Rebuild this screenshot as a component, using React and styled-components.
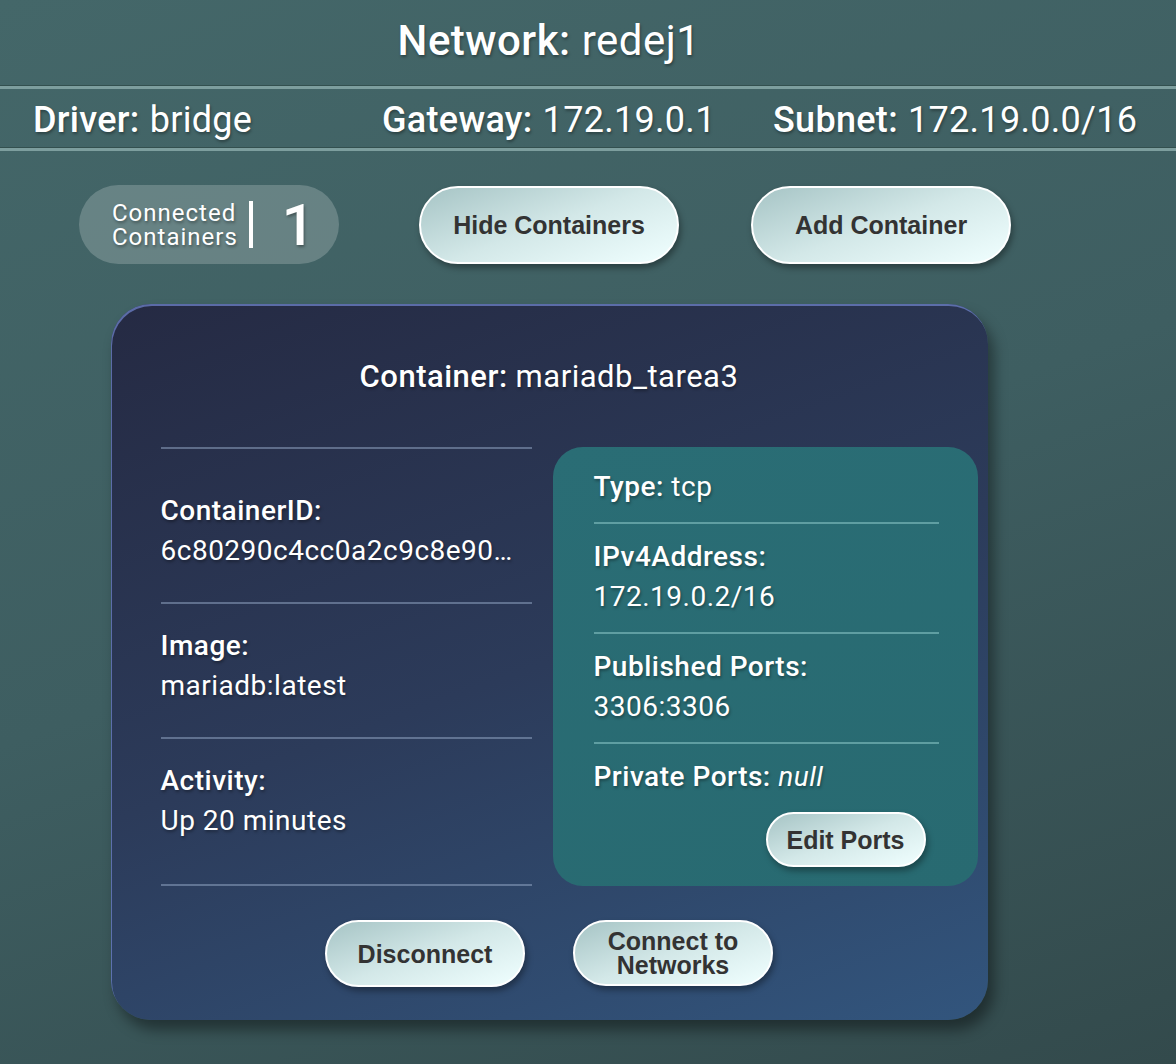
import React from "react";
import styled, { createGlobalStyle } from "styled-components";

const network = {
  name: "redej1",
  driver: "bridge",
  gateway: "172.19.0.1",
  subnet: "172.19.0.0/16",
};

const container = {
  name: "mariadb_tarea3",
  id: "6c80290c4cc0a2c9c8e90…",
  image: "mariadb:latest",
  activity: "Up 20 minutes",
  type: "tcp",
  ipv4: "172.19.0.2/16",
  published: "3306:3306",
};

const GlobalStyle = createGlobalStyle`
  html, body {
    margin: 0;
    padding: 0;
  }
  body {
    font-family: Roboto, "Noto Sans", sans-serif;
    color: #fff;
    letter-spacing: 0.5px;
    min-height: 1064px;
    background: linear-gradient(160deg, #446769 0%, #3e5e61 50%, #334a4c 100%);
  }
`;

const Page = styled.div`
  width: 1176px;
  min-height: 1064px;
  text-shadow: 1px 2px 3px rgba(0, 0, 0, 0.35);
`;

const Title = styled.h1`
  width: 1098px;
  height: 85px;
  margin: 0;
  display: flex;
  align-items: center;
  justify-content: center;
  font-size: 42px;
  font-weight: 400;
  padding-bottom: 4px;
  box-sizing: border-box;
  & > b {
    font-weight: 500;
    margin-right: 11px;
  }
`;

const Rule = styled.div`
  height: 3px;
  background: #7d9e9e;
  border-top: 1px solid #33504f;
`;

const InfoRow = styled.div`
  display: grid;
  grid-template-columns: 349px 391px 1fr;
  align-items: center;
  height: 58px;
  padding: 3px 0 0 33px;
  box-sizing: border-box;
  font-size: 36px;
  letter-spacing: 0.3px;
  & b {
    font-weight: 500;
    margin-right: 10px;
  }
`;

const Main = styled.main`
  width: 1098px;
  display: flex;
  flex-direction: column;
  align-items: center;
  padding: 34px 0 40px;
`;

const Toolbar = styled.div`
  align-self: flex-start;
  display: flex;
  align-items: center;
  gap: 72px;
  margin: 0 0 40px 79px;
`;

const CountPill = styled.div`
  width: 260px;
  height: 79px;
  box-sizing: border-box;
  margin-right: 8px;
  padding-left: 33px;
  border-radius: 40px;
  background: rgba(255, 255, 255, 0.2);
  display: flex;
  align-items: center;
  font-size: 24px;
  line-height: 24px;
  letter-spacing: 1px;
`;

const Bar = styled.span`
  width: 4px;
  height: 47px;
  background: #fff;
  margin: 0 29px 0 11px;
`;

const Count = styled.span`
  font-size: 58px;
  font-weight: 500;
  line-height: 1;
`;

const Button = styled.button`
  width: ${(p) => p.$w || 260}px;
  height: ${(p) => p.$h || 78}px;
  border: 2px solid #fff;
  border-radius: 40px;
  background: linear-gradient(160deg, #a6c4c5 0%, #d3e8e8 50%, #f0ffff 100%);
  box-shadow: 2px 4px 6px rgba(0, 0, 0, 0.35);
  color: #333;
  font-family: "Liberation Sans", Arial, sans-serif;
  font-weight: 700;
  font-size: 25px;
  line-height: 24px;
  letter-spacing: 0;
  text-shadow: none;
  padding: 0;
  cursor: pointer;
`;

const Card = styled.section`
  width: 877px;
  box-sizing: border-box;
  border-radius: 40px;
  background: linear-gradient(160deg, #252a43 0%, #2c3b5a 50%, #32557d 100%);
  box-shadow: inset 1px 2px 0 rgba(110, 130, 200, 0.75), 6px 10px 14px rgba(0, 0, 0, 0.4);
  padding: 53px 0 33px;
  display: flex;
  flex-direction: column;
  align-items: center;
`;

const CardTitle = styled.h2`
  margin: 0 0 50px;
  font-size: 31px;
  line-height: 40px;
  font-weight: 400;
  & > b {
    font-weight: 500;
    margin-right: 8px;
  }
`;

const Details = styled.div`
  align-self: stretch;
  display: grid;
  grid-template-columns: 371px 425px;
  gap: 21px;
  margin: 0 10px 0 50px;
`;

const FieldList = styled.div`
  display: flex;
  flex-direction: column;
  justify-content: space-between;
`;

const Divider = styled.hr`
  width: 100%;
  height: 2px;
  margin: 0;
  border: none;
  background: ${(p) => p.$tint || "rgba(150, 170, 200, 0.5)"};
`;

const Field = styled.div`
  font-size: 28px;
  line-height: 40px;
  padding: 22px 0 31px;
  &:first-of-type {
    margin-top: 20px;
  }
  &:last-of-type {
    margin-bottom: 12px;
  }
`;

const Label = styled.div`
  font-weight: 500;
  & > span {
    font-weight: 400;
  }
  & > i {
    font-weight: 400;
  }
`;

const Value = styled.div`
  white-space: nowrap;
  overflow: hidden;
  text-overflow: ellipsis;
`;

const PortsPanel = styled.div`
  background: linear-gradient(160deg, #2a6d75 0%, #286a71 100%);
  border-radius: 30px;
  padding: 20px 39px 19px 41px;
  display: flex;
  flex-direction: column;
  font-size: 28px;
  line-height: 40px;
  & > hr {
    margin: 15px 0 13px;
  }
`;

const EditButton = styled(Button)`
  align-self: flex-end;
  margin: 15px 13px 0 0;
`;

const Actions = styled.div`
  display: flex;
  gap: 48px;
  margin-top: 34px;
`;

const App = () => {
  return (
    <Page>
      <GlobalStyle />
      <Title>
        <b>Network:</b>
        {network.name}
      </Title>
      <Rule />
      <InfoRow>
        <div>
          <b>Driver:</b>
          {network.driver}
        </div>
        <div>
          <b>Gateway:</b>
          {network.gateway}
        </div>
        <div>
          <b>Subnet:</b>
          {network.subnet}
        </div>
      </InfoRow>
      <Rule />
      <Main>
        <Toolbar>
          <CountPill>
            <span>
              Connected
              <br />
              Containers
            </span>
            <Bar />
            <Count>1</Count>
          </CountPill>
          <Button>Hide Containers</Button>
          <Button>Add Container</Button>
        </Toolbar>
        <Card>
          <CardTitle>
            <b>Container:</b>
            {container.name}
          </CardTitle>
          <Details>
            <FieldList>
              <Divider />
              <Field>
                <Label>ContainerID:</Label>
                <Value>{container.id}</Value>
              </Field>
              <Divider />
              <Field>
                <Label>Image:</Label>
                <Value>{container.image}</Value>
              </Field>
              <Divider />
              <Field>
                <Label>Activity:</Label>
                <Value>{container.activity}</Value>
              </Field>
              <Divider />
            </FieldList>
            <PortsPanel>
              <Label>
                Type: <span>{container.type}</span>
              </Label>
              <Divider $tint="rgba(140, 200, 200, 0.55)" />
              <Label>IPv4Address:</Label>
              <Value>{container.ipv4}</Value>
              <Divider $tint="rgba(140, 200, 200, 0.55)" />
              <Label>Published Ports:</Label>
              <Value>{container.published}</Value>
              <Divider $tint="rgba(140, 200, 200, 0.55)" />
              <Label>
                Private Ports: <i>null</i>
              </Label>
              <EditButton $w={160} $h={55}>
                Edit Ports
              </EditButton>
            </PortsPanel>
          </Details>
          <Actions>
            <Button $w={200} $h={67}>
              Disconnect
            </Button>
            <Button $w={200} $h={66}>
              Connect to
              <br />
              Networks
            </Button>
          </Actions>
        </Card>
      </Main>
    </Page>
  );
};

export default App;
